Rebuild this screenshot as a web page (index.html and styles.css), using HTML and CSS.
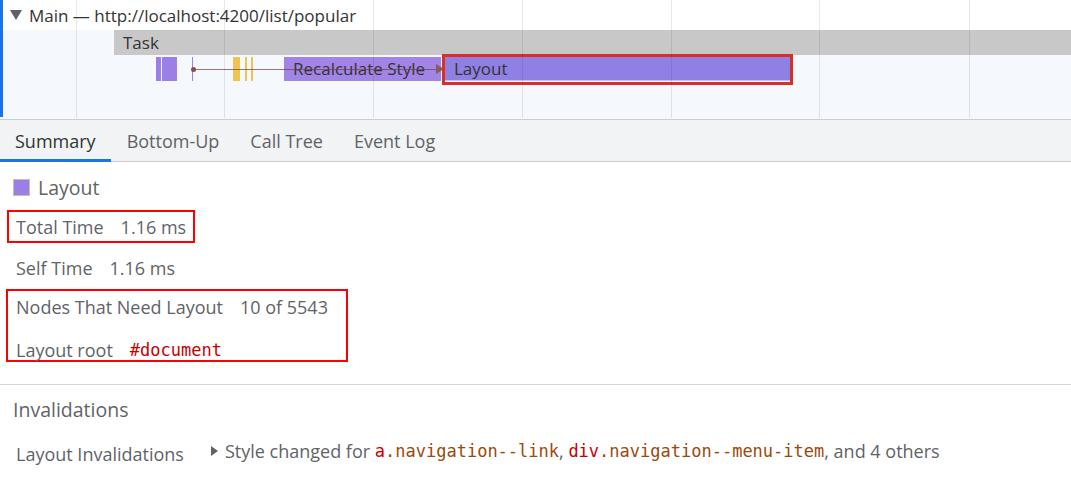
FILE: index.html
```html
<!DOCTYPE html>
<html>
<head>
<meta charset="utf-8">
<link rel="stylesheet" href="styles.css">
</head>
<body>
<div class="timeline">
  <div class="track-header">
    <span class="caret"></span>
    <span class="track-title">Main — http://localhost:4200/list/popular</span>
  </div>
  <div class="track-body"></div>
  <div class="canvas">
    <div class="bar task">Task</div>
    <div class="bar ev ev-a"></div>
    <div class="bar ev ev-b"></div>
    <div class="bar ev ev-c"></div>
    <div class="bar yel y1"></div>
    <div class="bar yel y2"></div>
    <div class="bar yel y3"></div>
    <div class="bar recalc">Recalculate Style</div>
    <div class="flow-line"></div>
    <div class="flow-dot"></div>
    <div class="flow-head"></div>
    <div class="bar layout">Layout</div>
    <div class="sel-box"></div>
    <div class="gridline g1"></div>
    <div class="gridline g2"></div>
    <div class="gridline g3"></div>
    <div class="gridline g4"></div>
    <div class="gridline g5"></div>
    <div class="gridline g6"></div>
    <div class="gridline g7"></div>
  </div>
  <div class="track-marker"></div>
</div>

<div class="tabs">
  <div class="tab active">Summary</div>
  <div class="tab">Bottom-Up</div>
  <div class="tab">Call Tree</div>
  <div class="tab">Event Log</div>
</div>

<div class="summary">
  <div class="title-row">
    <span class="swatch"></span>
    <span class="title">Layout</span>
  </div>
  <div class="hl hl-1">
    <div class="row"><span class="label">Total Time</span><span class="value">1.16 ms</span></div>
  </div>
  <div class="row self-row"><span class="label">Self Time</span><span class="value">1.16 ms</span></div>
  <div class="hl hl-2">
    <div class="row nodes-row"><span class="label">Nodes That Need Layout</span><span class="value">10 of 5543</span></div>
    <div class="row root-row"><span class="label">Layout root</span><span class="mono tag">#document</span></div>
  </div>
</div>

<div class="invalidations">
  <div class="section-title">Invalidations</div>
  <div class="row inv-row">
    <span class="label inv-label">Layout Invalidations</span>
    <span class="inv-value"><span class="expander"></span>Style changed for <span class="mono"><span class="tag">a</span><span class="cls">.navigation--link</span></span>, <span class="mono"><span class="tag">div</span><span class="cls">.navigation--menu-item</span></span>, and 4 others</span>
  </div>
</div>
</body>
</html>
```
FILE: styles.css
```css
* { box-sizing: border-box; }
html, body { margin: 0; padding: 0; background: #fff; }
body {
  font-family: "Open Sans", "Noto Sans", sans-serif;
  color: #5f6368;
  width: 1071px;
  height: 484px;
  overflow: hidden;
}

/* ---------- timeline ---------- */
.timeline {
  position: relative;
  height: 120px;
  border-bottom: 1px solid #cbcdd1;
}
.track-header {
  height: 30px;
  display: flex;
  align-items: center;
  padding-left: 10px;
  background: #fff;
  font-size: 17px;
  color: #333;
}
.caret {
  width: 0;
  height: 0;
  border-left: 6px solid transparent;
  border-right: 6px solid transparent;
  border-top: 10px solid #5f6368;
  margin-right: 7px;
}
.track-body {
  height: 89px;
  background: #f5f8fd;
}
.track-marker {
  position: absolute;
  left: 0;
  top: 0;
  width: 3px;
  height: 117px;
  background: #1a73e8;
}
.canvas {
  position: absolute;
  inset: 0;
}
.bar {
  position: absolute;
  height: 24px;
  top: 57px;
  font-size: 17px;
  color: #333;
  line-height: 24px;
  white-space: nowrap;
  overflow: hidden;
}
.task {
  left: 114px;
  right: 0;
  top: 30px;
  height: 25px;
  line-height: 25px;
  background: #c8c8c8;
  padding-left: 9px;
}
.ev { background: #9b7fe6; }
.ev-a { left: 156px; width: 5px; }
.ev-b { left: 162px; width: 15px; }
.ev-c { left: 192px; width: 1px; }
.yel { background: #f0c450; }
.y1 { left: 233px; width: 7px; }
.y2 { left: 245px; width: 2px; }
.y3 { left: 251px; width: 2px; }
.recalc {
  left: 284px;
  width: 157px;
  background: #a184e6;
  padding-left: 9px;
}
.layout {
  left: 445px;
  width: 345px;
  background: #9080e4;
  border-bottom: 1px solid #c9bff2;
  padding-left: 9px;
}
.flow-line {
  position: absolute;
  left: 193px;
  top: 69px;
  width: 246px;
  height: 1px;
  background: rgba(120, 60, 60, 0.7);
}
.flow-dot {
  position: absolute;
  left: 191px;
  top: 67px;
  width: 5px;
  height: 5px;
  border-radius: 50%;
  background: #8a4a4a;
}
.flow-head {
  position: absolute;
  left: 436px;
  top: 64px;
  width: 0;
  height: 0;
  border-top: 5px solid transparent;
  border-bottom: 5px solid transparent;
  border-left: 8px solid #8a5a5a;
}
.sel-box {
  position: absolute;
  left: 442px;
  top: 54px;
  width: 351px;
  height: 31px;
  border: 3px solid #d93025;
}
.gridline {
  position: absolute;
  top: 0;
  width: 1px;
  height: 118px;
  background: rgba(0, 0, 0, 0.09);
}
.g1 { left: 76px; }
.g2 { left: 224px; }
.g3 { left: 373px; }
.g4 { left: 522px; }
.g5 { left: 671px; }
.g6 { left: 819px; }
.g7 { left: 969px; }

/* ---------- tabs ---------- */
.tabs {
  display: flex;
  height: 42px;
  background: #f1f3f4;
  border-bottom: 1px solid #cbcdd1;
}
.tab {
  padding: 0 15px;
  margin-right: 1px;
  display: flex;
  align-items: center;
  font-size: 18px;
  color: #5f6368;
  position: relative;
}
.tab.active {
  color: #333;
}
.tab.active::after {
  content: "";
  position: absolute;
  left: 0;
  right: 0;
  bottom: -1px;
  height: 3px;
  background: #1a73e8;
}

/* ---------- summary ---------- */
.summary {
  font-size: 18px;
}
.title-row {
  display: flex;
  align-items: center;
  height: 40px;
  margin-top: 5px;
  padding-left: 13px;
}
.swatch {
  width: 17px;
  height: 17px;
  background: #9b7fe6;
  border: 1px solid #c0c0c0;
  margin-right: 8px;
}
.title {
  font-size: 19.5px;
  color: #5f6368;
}
.row {
  display: flex;
  align-items: center;
}
.label { margin-right: 17px; }
.value { color: #5f6368; }
.hl {
  border: 2px solid #ff0000;
  width: fit-content;
}
.hl-1 {
  margin: 3px 0 0 7px;
  height: 33px;
  padding: 0 7px 0 7px;
}
.hl-1 .row { height: 29px; }
.self-row {
  height: 46px;
  padding: 3px 0 0 16px;
}
.hl-2 {
  margin-left: 6px;
  width: 342px;
  height: 73px;
  padding-left: 8px;
}
.nodes-row { height: 32px; }
.root-row {
  height: 37px;
  padding-top: 16px;
}
.mono {
  font-family: "DejaVu Sans Mono", "Liberation Mono", monospace;
  font-size: 17px;
}
.tag { color: #c80000; }
.cls { color: #9a4a0a; }

/* ---------- invalidations ---------- */
.invalidations {
  margin-top: 22px;
  border-top: 1px solid #d4d6d9;
}
.section-title {
  height: 48px;
  display: flex;
  align-items: center;
  padding-left: 13px;
  font-size: 19.5px;
}
.inv-row {
  height: 40px;
  padding-left: 16px;
  font-size: 18px;
}
.inv-label {
  margin-right: 27px;
  position: relative;
  top: 1px;
}
.inv-value {
  display: flex;
  align-items: center;
  white-space: pre;
  position: relative;
  top: -2px;
}
.expander {
  width: 0;
  height: 0;
  border-top: 5px solid transparent;
  border-bottom: 5px solid transparent;
  border-left: 7px solid #5f6368;
  margin-right: 7px;
}
```
